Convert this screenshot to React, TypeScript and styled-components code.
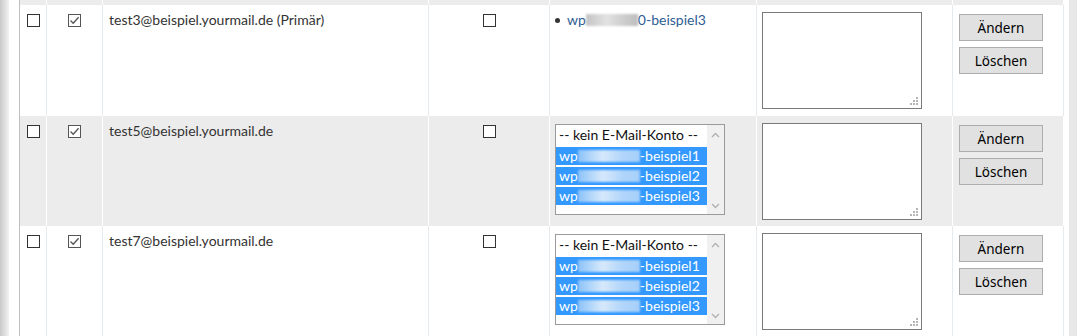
import React from 'react';
import styled, { createGlobalStyle } from 'styled-components';

const GlobalStyle = createGlobalStyle`
  html, body {
    margin: 0;
    padding: 0;
    background: #fff;
    overflow: hidden;
  }
  body {
    font-family: Lato, "Open Sans", sans-serif;
  }
`;

const Page = styled.div`
  display: flex;
  height: 336px;
  overflow: hidden;
`;

const LeftShade = styled.div`
  width: 9px;
  flex: none;
  background: linear-gradient(to right, #c9c9c9, #f3f3f3);
`;

const Gutter = styled.div<{ $w: number }>`
  width: ${(p) => p.$w}px;
  flex: none;
  background: #fff;
`;

const RightShade = styled.div`
  width: 8px;
  flex: none;
  background: #e8e8e8;
`;

const Table = styled.div`
  width: 1044px;
  flex: none;
  border-left: 1px solid #bfbfbf;
  display: flex;
  flex-direction: column;
`;

const Row = styled.div<{ $alt?: boolean; $h: number }>`
  display: grid;
  grid-template-columns: 27px 56px 326px 121px 207px 196px 111px;
  height: ${(p) => p.$h}px;
  flex: none;
  background: ${(p) => (p.$alt ? '#ececec' : '#fff')};
  color: #333;
`;

const Cell = styled.div<{ $alt?: boolean; $center?: boolean; $pad?: number }>`
  border-right: 1px solid ${(p) => (p.$alt ? '#ffffff' : '#e4eaed')};
  display: flex;
  flex-direction: column;
  align-items: ${(p) => (p.$center ? 'center' : 'flex-start')};
  padding: ${(p) => p.$pad ?? 9}px ${(p) => (p.$center ? 0 : 6)}px 0;
  min-width: 0;
`;

const Box = styled.span<{ $checked?: boolean }>`
  width: 13px;
  height: 13px;
  box-sizing: border-box;
  border: 1px solid ${(p) => (p.$checked ? '#555' : '#333')};
  background: #fff;
  display: flex;
  align-items: center;
  justify-content: center;
`;

const Email = styled.span`
  font-size: 14px;
  line-height: 18px;
  color: #333;
  margin-top: -3px;
  white-space: nowrap;
`;

const Bullet = styled.div`
  display: flex;
  align-items: center;
  gap: 6px;
  font-size: 14px;
  line-height: 18px;
  margin-top: -3px;
  margin-left: -1px;
  color: #2e5d96;
  white-space: nowrap;

  &::before {
    content: '';
    width: 5px;
    height: 5px;
    border-radius: 50%;
    background: #333;
    margin-right: 1px;
  }
`;

const Blur = styled.span<{ $w: number; $sel?: boolean }>`
  display: inline-block;
  width: ${(p) => p.$w}px;
  height: 12px;
  vertical-align: -1px;
  background: ${(p) =>
    p.$sel
      ? 'linear-gradient(to right, #8cc3fa, #d7e9fb 40%, #b3d6fa 70%, #a5cff9)'
      : 'linear-gradient(to right, #c4c4c4, #e2e2e2 40%, #cfcfcf 70%, #bdbdbd)'};
  filter: blur(1.2px);
`;

const ListBox = styled.div`
  width: 170px;
  height: 91px;
  box-sizing: border-box;
  border: 1px solid #9a9a9a;
  background: #fff;
  display: flex;
  margin-left: -1px;
  margin-top: -1px;
`;

const Options = styled.div`
  width: 151px;
  flex: none;
  display: flex;
  flex-direction: column;
  overflow: hidden;
`;

const Option = styled.div<{ $sel?: boolean }>`
  height: 18px;
  margin-top: ${(p) => (p.$sel ? 2 : 0)}px;
  padding: ${(p) => (p.$sel ? 0 : 1)}px 0 ${(p) => (p.$sel ? 0 : 1)}px 3px;
  font-size: 14px;
  line-height: 18px;
  white-space: nowrap;
  overflow: hidden;
  color: ${(p) => (p.$sel ? '#fff' : '#111')};
  background: ${(p) => (p.$sel ? '#3399ff' : 'transparent')};
`;

const ScrollBar = styled.div`
  flex: 1;
  background: #f0f0f0;
  display: flex;
  flex-direction: column;
  justify-content: space-between;
  align-items: center;
  padding: 7px 0 5px;
`;

const TextArea = styled.div<{ $h: number }>`
  width: 160px;
  height: ${(p) => p.$h}px;
  box-sizing: border-box;
  border: 1px solid #7a7a7a;
  background: #fff;
  margin-left: -1px;
  margin-top: -2px;
  display: flex;
  align-items: flex-end;
  justify-content: flex-end;
  padding: 0 3px 3px 0;
`;

const Button = styled.button`
  width: 84px;
  height: 27px;
  box-sizing: border-box;
  border: 1px solid #adadad;
  background: #e1e1e1;
  color: #000;
  font-family: "Noto Sans", "Open Sans", sans-serif;
  font-size: 13.5px;
  padding: 0;
  margin: 0 0 6px;
  border-radius: 0;
`;

const Check = () => (
  <svg width="11" height="11" viewBox="0 0 11 11">
    <path d="M1.5 5.5 L4.2 8.2 L9.6 2.2" fill="none" stroke="#555" strokeWidth="1.3" />
  </svg>
);

const Chevron = ({ up }: { up?: boolean }) => (
  <svg width="9" height="6" viewBox="0 0 9 6">
    <path d={up ? 'M1 5 L4.5 1.5 L8 5' : 'M1 1 L4.5 4.5 L8 1'} fill="none" stroke="#b0b0b0" strokeWidth="1.3" />
  </svg>
);

const Grip = () => (
  <svg width="8" height="8" viewBox="0 0 8 8" fill="#b5b5b5">
    <rect x="6" y="0" width="2" height="2" />
    <rect x="3" y="3" width="2" height="2" />
    <rect x="6" y="3" width="2" height="2" />
    <rect x="0" y="6" width="2" height="2" />
    <rect x="3" y="6" width="2" height="2" />
    <rect x="6" y="6" width="2" height="2" />
  </svg>
);

const AccountList = () => (
  <ListBox>
    <Options>
      <Option>-- kein E-Mail-Konto --</Option>
      {[1, 2, 3].map((n) => (
        <Option key={n} $sel>
          wp<Blur $w={62} $sel />-beispiel{n}
        </Option>
      ))}
    </Options>
    <ScrollBar>
      <Chevron up />
      <Chevron />
    </ScrollBar>
  </ListBox>
);

interface RowData {
  email: string;
  alt?: boolean;
  height: number;
  primary?: boolean;
}

const rows: RowData[] = [
  { email: 'test3@beispiel.yourmail.de (Primär)', height: 111, primary: true },
  { email: 'test5@beispiel.yourmail.de', height: 110, alt: true },
  { email: 'test7@beispiel.yourmail.de', height: 110 },
];

const AddressRow = ({ email, alt, height, primary }: RowData) => (
  <Row $alt={alt} $h={height}>
    <Cell $alt={alt} $center><Box /></Cell>
    <Cell $alt={alt} $center><Box $checked><Check /></Box></Cell>
    <Cell $alt={alt}><Email>{email}</Email></Cell>
    <Cell $alt={alt} $center><Box /></Cell>
    <Cell $alt={alt}>
      {primary ? (
        <Bullet>
          <span>wp<Blur $w={52} />0-beispiel3</span>
        </Bullet>
      ) : (
        <AccountList />
      )}
    </Cell>
    <Cell $alt={alt}>
      <TextArea $h={97}><Grip /></TextArea>
    </Cell>
    <Cell $alt={alt}>
      <Button>Ändern</Button>
      <Button>Löschen</Button>
    </Cell>
  </Row>
);

export default function App() {
  return (
    <>
      <GlobalStyle />
      <Page>
        <LeftShade />
        <Gutter $w={10} />
        <Table>
          <Row $alt $h={5}>
            {Array.from({ length: 7 }).map((_, i) => (
              <Cell key={i} $alt $pad={0} />
            ))}
          </Row>
          {rows.map((r) => (
            <AddressRow key={r.email} {...r} />
          ))}
        </Table>
        <Gutter $w={5} />
        <RightShade />
      </Page>
    </>
  );
}
